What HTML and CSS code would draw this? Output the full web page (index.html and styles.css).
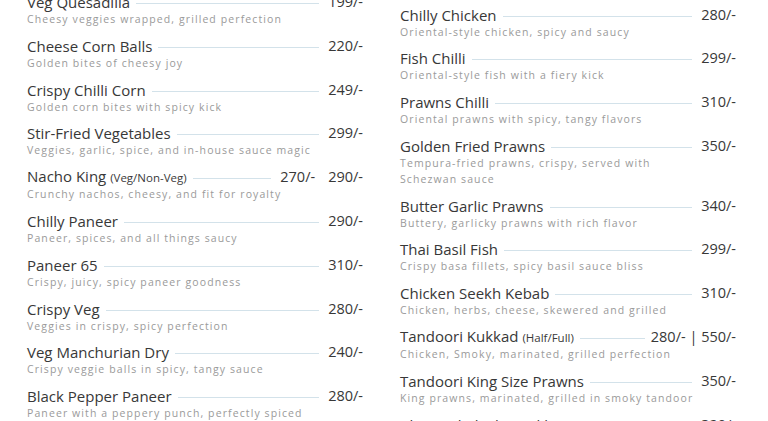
FILE: index.html
```html
<!DOCTYPE html>
<html>
<head>
<meta charset="utf-8">
<link rel="stylesheet" href="styles.css">
</head>
<body>
<main class="menu">
  <section class="col col-left">
    <div class="item"><div class="row"><span class="name">Veg Quesadilla</span><span class="leader"></span><span class="price">199/-</span></div><div class="desc">Cheesy veggies wrapped, grilled perfection</div></div>
    <div class="item"><div class="row"><span class="name">Cheese Corn Balls</span><span class="leader"></span><span class="price">220/-</span></div><div class="desc">Golden bites of cheesy joy</div></div>
    <div class="item"><div class="row"><span class="name">Crispy Chilli Corn</span><span class="leader"></span><span class="price">249/-</span></div><div class="desc">Golden corn bites with spicy kick</div></div>
    <div class="item"><div class="row"><span class="name">Stir-Fried Vegetables</span><span class="leader"></span><span class="price">299/-</span></div><div class="desc">Veggies, garlic, spice, and in-house sauce magic</div></div>
    <div class="item"><div class="row"><span class="name">Nacho King <small class="note">(Veg/Non-Veg)</small></span><span class="leader"></span><span class="price">270/-</span><span class="price price-second">290/-</span></div><div class="desc">Crunchy nachos, cheesy, and fit for royalty</div></div>
    <div class="item"><div class="row"><span class="name">Chilly Paneer</span><span class="leader"></span><span class="price">290/-</span></div><div class="desc">Paneer, spices, and all things saucy</div></div>
    <div class="item"><div class="row"><span class="name">Paneer 65</span><span class="leader"></span><span class="price">310/-</span></div><div class="desc">Crispy, juicy, spicy paneer goodness</div></div>
    <div class="item"><div class="row"><span class="name">Crispy Veg</span><span class="leader"></span><span class="price">280/-</span></div><div class="desc">Veggies in crispy, spicy perfection</div></div>
    <div class="item"><div class="row"><span class="name">Veg Manchurian Dry</span><span class="leader"></span><span class="price">240/-</span></div><div class="desc">Crispy veggie balls in spicy, tangy sauce</div></div>
    <div class="item"><div class="row"><span class="name">Black Pepper Paneer</span><span class="leader"></span><span class="price">280/-</span></div><div class="desc">Paneer with a peppery punch, perfectly spiced</div></div>
  </section>
  <section class="col col-right">
    <div class="item"><div class="row"><span class="name">Chilly Chicken</span><span class="leader"></span><span class="price">280/-</span></div><div class="desc">Oriental-style chicken, spicy and saucy</div></div>
    <div class="item"><div class="row"><span class="name">Fish Chilli</span><span class="leader"></span><span class="price">299/-</span></div><div class="desc">Oriental-style fish with a fiery kick</div></div>
    <div class="item"><div class="row"><span class="name">Prawns Chilli</span><span class="leader"></span><span class="price">310/-</span></div><div class="desc">Oriental prawns with spicy, tangy flavors</div></div>
    <div class="item"><div class="row"><span class="name">Golden Fried Prawns</span><span class="leader"></span><span class="price">350/-</span></div><div class="desc">Tempura-fried prawns, crispy, served with<br>Schezwan sauce</div></div>
    <div class="item"><div class="row"><span class="name">Butter Garlic Prawns</span><span class="leader"></span><span class="price">340/-</span></div><div class="desc">Buttery, garlicky prawns with rich flavor</div></div>
    <div class="item"><div class="row"><span class="name">Thai Basil Fish</span><span class="leader"></span><span class="price">299/-</span></div><div class="desc">Crispy basa fillets, spicy basil sauce bliss</div></div>
    <div class="item"><div class="row"><span class="name">Chicken Seekh Kebab</span><span class="leader"></span><span class="price">310/-</span></div><div class="desc">Chicken, herbs, cheese, skewered and grilled</div></div>
    <div class="item"><div class="row"><span class="name">Tandoori Kukkad <small class="note">(Half/Full)</small></span><span class="leader leader-short"></span><span class="price">280/- | 550/-</span></div><div class="desc">Chicken, Smoky, marinated, grilled perfection</div></div>
    <div class="item"><div class="row"><span class="name">Tandoori King Size Prawns</span><span class="leader"></span><span class="price">350/-</span></div><div class="desc">King prawns, marinated, grilled in smoky tandoor</div></div>
    <div class="item"><div class="row"><span class="name">Charcoal Chicken Tikka</span><span class="leader"></span><span class="price">320/-</span></div><div class="desc">Smoky chicken chunks, charcoal grilled</div></div>
  </section>
</main>
</body>
</html>
```
FILE: styles.css
```css
html, body {
  margin: 0;
  padding: 0;
  background: #ffffff;
  height: 421px;
  overflow: hidden;
}
body {
  font-family: "Open Sans", "Lato", sans-serif;
  color: #3a3a3a;
}
.menu {
  display: grid;
  grid-template-columns: 336px 336px;
  column-gap: 37px;
  padding-left: 27px;
  align-items: start;
}
.col {
  display: flex;
  flex-direction: column;
  gap: 9.8px;
}
.col-left { margin-top: -7px; }
.col-right { margin-top: 5.5px; }
.item {
  display: flex;
  flex-direction: column;
}
.row {
  display: flex;
  align-items: center;
  height: 18px;
  white-space: nowrap;
}
.name {
  font-size: 15px;
  line-height: 18px;
  color: #383838;
}
.note {
  font-size: 11.5px;
  color: #3a3a3a;
}
.leader {
  flex: 1;
  height: 1px;
  background: #d3e2ea;
  margin: 3px 9px 0 6px;
}
.leader-short { margin-right: 6px; }
.price {
  font-size: 14.5px;
  line-height: 18px;
  color: #383838;
}
.price-second { margin-left: 13px; }
.desc {
  font-size: 10.5px;
  line-height: 16px;
  letter-spacing: 1.1px;
  color: #9a9a9a;
  white-space: nowrap;
}
```
